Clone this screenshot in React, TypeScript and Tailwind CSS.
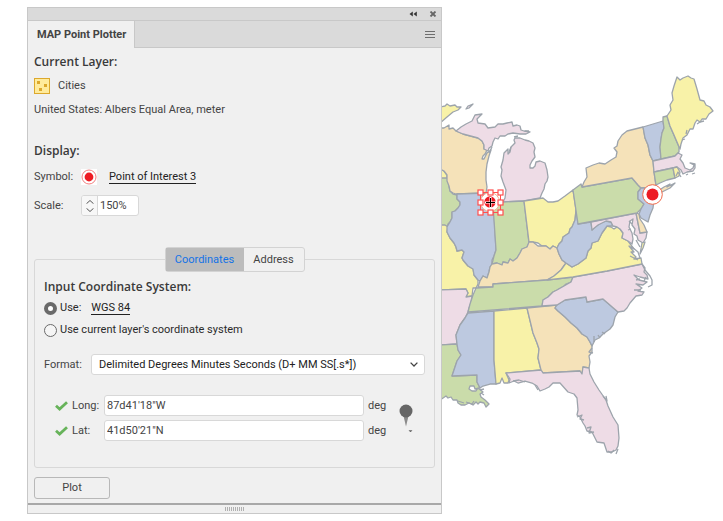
import { useState } from 'react';
import type { ReactNode } from 'react';

interface Region {
  name: string;
  fill: string;
  d: string;
}

const YELLOW = '#f8f2a8';
const PINK = '#eedce6';
const GREEN = '#cadcaa';
const BLUE = '#bdc9e0';
const ORANGE = '#f5e2b9';

const regions: Region[] = [
  { name: 'Minnesota arrowhead', fill: YELLOW, d: 'M440 107 445 106 447 104 450 106 455 105 457 107 461 107 458 110 453 112 447 117 440 123Z' },
  { name: 'Minnesota', fill: YELLOW, d: 'M440 169 444 171 447 175 447 179 440 179Z' },
  { name: 'Iowa', fill: GREEN, d: 'M440 178 447 178 448 180 449 186 450 191 453 194 457 195 457 199 460 202 460 205 458 208 455 211 452 212 452 218 450 222 448 224 447 227 440 225Z' },
  { name: 'Missouri', fill: YELLOW, d: 'M440 225 445 225 448 227 447 232 450 238 454 243 456 247 457 251 462 250 464 252 462 258 463 260 468 266 473 269 474 275 478 280 478 284 476 288 473 288 472 296 466 297 468 293 466 289 440 290Z' },
  { name: 'Arkansas', fill: PINK, d: 'M440 290 466 289 468 293 466 297 472 296 471 303 469 308 468 312 465 318 460 325 458 330 456 335 457 344 440 345Z' },
  { name: 'Louisiana', fill: GREEN, d: 'M440 345 457 344 458 350 461 355 457 361 455 367 452 376 477 375 477 382 480 388 475 389 474 386 470 386 469 389 472 391 476 391 478 388 483 392 480 394 481 397 485 400 489 404 486 407 484 403 480 402 478 404 476 402 473 405 469 403 465 405 461 405 458 403 457 400 453 400 451 397 448 398 446 396 440 400Z' },
  { name: 'Wisconsin', fill: ORANGE, d: 'M440 128 444 128 449 125 449 129 453 128 456 131 463 134 478 138 482 141 484 145 484 149 487 150 485 154 483 156 482 159 484 159 487 153 491 150 489 156 487 164 486 172 486 180 487 187 486 193 456 194 453 193 450 191 449 186 447 181 447 175 444 171 440 169Z' },
  { name: 'Upper Michigan', fill: PINK, d: 'M456 131 461 127 466 124 472 121 475 115 482 114 477 119 478 123 485 124 488 128 495 127 498 124 503 124 507 123 512 122 513 126 517 125 520 126 521 130 524 131 530 132 526 134 520 134 513 133 508 134 505 136 500 136 498 139 495 138 493 142 492 146 489 148 488 151 484 149 484 145 482 141 478 138 463 134Z' },
  { name: 'Isle Royale', fill: PINK, d: 'M466 109 468 106 473 104 469 108Z' },
  { name: 'Michigan', fill: PINK, d: 'M515 138 520 138 525 140 529 141 533 143 535 148 534 152 535 157 532 161 530 165 530 168 533 168 535 166 536 162 540 161 545 163 547 170 548 177 547 181 545 184 544 189 542 193 540 198 524 201 503 202 505 198 506 190 503 182 501 176 502 170 501 167 503 160 504 153 508 149 508 154 510 152 511 147 515 143 514 140Z' },
  { name: 'Illinois', fill: BLUE, d: 'M457 194 486 193 488 200 493 205 494 213 496 250 494 256 492 260 492 264 490 267 489 272 487 278 483 276 480 281 478 280 474 275 473 269 468 266 463 260 462 258 464 252 462 250 457 251 456 247 454 243 450 238 447 232 447 227 450 222 452 218 452 212 455 211 458 208 460 205 460 202 457 199Z' },
  { name: 'Indiana', fill: GREEN, d: 'M493 205 497 204 503 202 524 201 529 243 527 247 522 249 520 253 517 258 513 261 510 259 508 263 503 262 502 265 497 263 492 264 494 256 496 250Z' },
  { name: 'Ohio', fill: YELLOW, d: 'M524 201 543 198 548 202 553 202 558 201 565 196 573 190 576 210 575 220 572 227 570 229 569 233 563 237 562 241 559 244 557 248 553 246 550 249 546 246 542 246 538 243 533 242 529 242Z' },
  { name: 'Kentucky', fill: ORANGE, d: 'M478 287 480 281 483 276 487 278 489 272 490 267 492 264 497 263 502 265 503 262 508 263 510 259 513 261 517 258 520 253 522 249 527 247 529 242 533 242 538 246 542 246 546 246 550 249 553 246 557 248 559 254 562 260 566 263 561 270 554 276 547 280 493 284 493 287Z' },
  { name: 'Tennessee', fill: GREEN, d: 'M476 288 493 287 493 284 547 280 573 277 571 282 566 284 564 286 557 290 553 292 548 297 543 300 542 306 468 312 470 304 473 295Z' },
  { name: 'Mississippi', fill: BLUE, d: 'M468 313 494 311 494 360 496 384 490 384 483 386 480 388 477 382 477 375 452 376 455 367 457 361 461 355 458 350 457 344 456 335 458 330 460 325 465 318Z' },
  { name: 'Alabama', fill: YELLOW, d: 'M494 311 527 308 533 333 537 343 539 349 538 358 541 370 506 373 509 380 508 383 504 383 502 378 500 383 496 384 494 360Z' },
  { name: 'Georgia', fill: ORANGE, d: 'M527 308 557 305 555 308 558 311 565 317 571 323 577 328 582 334 587 337 590 342 592 346 592 352 589 356 590 362 589 368 583 367 582 374 580 371 543 373 541 370 538 358 539 349 537 343 533 333Z' },
  { name: 'Florida', fill: PINK, d: 'M506 373 541 370 543 373 580 371 582 374 583 367 589 368 590 374 594 382 599 390 606 400 608 406 613 417 618 425 619 438 618 446 616 450 612 452 607 452 604 443 597 442 595 438 592 432 587 431 585 426 583 423 580 417 577 415 578 410 577 398 574 394 568 392 560 383 553 383 549 387 545 389 540 391 537 386 532 383 525 381 518 383 514 381 509 383 510 379Z' },
  { name: 'South Carolina', fill: BLUE, d: 'M557 305 565 300 586 297 587 302 603 299 618 312 615 317 613 325 610 329 603 334 599 338 595 340 592 346 590 342 587 337 582 334 577 328 571 323 565 317 558 311 555 308Z' },
  { name: 'North Carolina', fill: PINK, d: 'M573 277 607 271 642 264 645 268 644 272 647 275 648 279 640 277 634 275 639 280 647 282 643 285 636 284 642 288 638 291 644 292 642 295 636 296 630 303 627 308 624 311 618 312 603 299 587 302 586 297 565 300 557 305 542 306 543 300 548 297 553 292 557 290 564 286 571 282Z' },
  { name: 'Virginia', fill: YELLOW, d: 'M547 280 554 276 561 270 566 263 572 267 578 264 586 258 588 251 591 248 592 243 598 241 602 233 607 226 611 227 614 229 617 227 620 229 623 233 622 238 628 241 631 245 634 249 629 246 634 252 631 252 636 257 634 259 641 258 642 264 607 271 573 277Z' },
  { name: 'West Virginia', fill: BLUE, d: 'M576 210 578 224 591 222 592 230 595 227 598 225 602 222 606 221 611 222 613 226 607 226 602 233 598 241 592 243 591 248 588 251 586 258 578 264 572 267 566 263 562 260 559 254 557 248 559 244 562 241 563 237 569 233 570 229 572 227 575 220Z' },
  { name: 'Maryland', fill: PINK, d: 'M591 222 636 213 640 233 647 232 646 238 643 243 638 240 637 236 634 234 635 229 632 225 633 219 630 221 629 227 632 233 633 239 632 244 628 241 622 238 623 233 620 229 617 227 613 226 611 222 606 221 598 225 592 230Z' },
  { name: 'Delmarva tip', fill: YELLOW, d: 'M642 243 645 242 643 248 640 254Z' },
  { name: 'Delaware', fill: ORANGE, d: 'M636 213 639 214 640 219 644 225 647 232 640 233Z' },
  { name: 'Pennsylvania', fill: GREEN, d: 'M573 190 581 184 582 187 632 178 638 185 641 188 638 192 638 199 644 204 641 209 637 213 578 224Z' },
  { name: 'New York', fill: ORANGE, d: 'M582 187 584 182 587 177 586 168 593 165 599 163 605 164 611 160 616 157 617 152 614 148 617 146 618 141 622 135 627 131 643 127 645 138 648 145 650 155 653 161 654 172 656 186 653 192 647 188 641 188 638 185 632 178Z' },
  { name: 'New Jersey', fill: BLUE, d: 'M641 188 647 188 652 191 651 196 654 200 653 208 650 215 648 222 641 218 639 214 641 209 644 204 638 199 638 192Z' },
  { name: 'Long Island', fill: ORANGE, d: 'M658 191 664 187 670 184 667 187 675 183 670 188 662 192Z' },
  { name: 'Vermont', fill: BLUE, d: 'M643 127 663 121 664 128 662 133 661 139 660 147 661 159 653 161 650 155 648 145 645 138Z' },
  { name: 'New Hampshire', fill: GREEN, d: 'M663 121 663 117 667 116 670 126 679 147 679 152 675 156 661 159 660 147 661 139 662 133 664 128Z' },
  { name: 'Maine', fill: YELLOW, d: 'M667 116 671 110 670 105 673 100 672 93 674 86 677 77 680 80 683 78 688 76 691 78 694 79 697 89 700 100 704 101 706 105 710 107 713 111 709 114 706 119 702 119 700 122 697 120 695 123 693 129 690 129 687 135 683 138 681 144 680 149 674 135 670 126Z' },
  { name: 'Massachusetts', fill: PINK, d: 'M653 161 675 156 678 153 682 155 680 159 683 163 685 168 690 170 693 168 694 165 690 163 695 164 695 168 693 171 687 172 683 174 681 170 677 167 654 172Z' },
  { name: 'Connecticut', fill: GREEN, d: 'M654 172 673 168 675 178 667 180 660 183 656 185Z' },
  { name: 'Rhode Island', fill: YELLOW, d: 'M673 168 677 167 680 172 679 176 675 178Z' },
];

// barrier islands, bays and other shoreline scribbles
const shoreline = [
  'M642 264 645 270 650 276 652 280 652 285 648 287',
  'M630 256 638 260M632 247 638 252 640 258M636 240 640 247',
  'M686 134 687 130M697 124 700 122 704 121M682 140 685 139',
  'M686 175 688 174M692 174 695 173M676 176 678 172 681 177',
  'M603 396 607 401 606 396M577 417 582 415 580 419 584 420M587 428 591 427 589 433 594 432',
  'M513 381 519 380 525 382M535 385 538 390M608 451 611 453 614 450M616 454 618 449',
  'M594 336 594 342M592 348 589 352 593 353M598 335 600 338M602 332 605 334',
  'M458 401 464 403M466 402 472 404 474 401M481 393 484 395M480 390 484 389',
  'M640 279 636 280M646 277 644 281M641 290 634 290M629 221 632 224M628 230 631 229',
  'M511 147 509 152M514 137 518 136M525 131 529 131M492 147 489 153',
];

const handles = [
  [480, 192], [490, 192], [500, 192],
  [480, 202], [500, 202],
  [480, 212], [490, 212], [500, 212],
];

const StateMap = () => (
  <svg viewBox="442 0 281 521" className="block h-auto w-full" role="img" aria-label="Eastern United States">
    <g stroke="#9da4ac" strokeWidth="1.3" strokeLinejoin="round">
      {regions.map(r => (
        <path key={r.name} fill={r.fill} d={r.d} />
      ))}
      {shoreline.map(d => (
        <path key={d} fill="none" d={d} />
      ))}
    </g>
    <circle cx="652.5" cy="194.5" r="9.8" fill="#fff" stroke="#f0694a" strokeWidth="1" />
    <circle cx="652.5" cy="194.5" r="6" fill="#ed1c24" />
    <circle cx="490" cy="202" r="9.5" fill="#fff" stroke="#f5b08a" strokeWidth="1" />
    <circle cx="490" cy="202" r="5.7" fill="#ed1c24" />
    <path d="M490.5 197v11M485 202.5h11" stroke="#fff" strokeWidth="2" />
    <path d="M490.5 198v9M486 202.5h9" stroke="#000" strokeWidth="1" />
    <rect x="480.5" y="192.5" width="20" height="20" fill="none" stroke="#ff4f4f" />
    {handles.map(([x, y]) => (
      <rect key={`${x}-${y}`} x={x - 2} y={y - 2} width="5" height="5" fill="#fff" stroke="#ff4f4f" strokeWidth="1.2" />
    ))}
  </svg>
);

const CheckMark = () => (
  <svg viewBox="0 0 13 10" className="h-[10px] w-[13px] shrink-0" aria-hidden="true">
    <path d="M1 4.800 4.600 8 12 1.200" fill="none" stroke="#67b35a" strokeWidth="2.800" />
  </svg>
);

interface CoordRowProps {
  id: string;
  label: string;
  value: string;
  onChange: (v: string) => void;
}

const CoordRow = ({ id, label, value, onChange }: CoordRowProps) => (
  <div className="flex items-center">
    <CheckMark />
    <label htmlFor={id} className="ml-1 w-8 shrink-0">
      {label}
    </label>
    <input
      id={id}
      value={value}
      onChange={e => onChange(e.target.value)}
      className="h-[21px] min-w-0 flex-1 rounded-[3px] border border-[#d8d8d8] bg-white px-[2px] outline-none"
    />
    <span className="ml-1 w-[19px] shrink-0">deg</span>
  </div>
);

interface RadioRowProps {
  id: string;
  checked: boolean;
  onSelect: () => void;
  children: ReactNode;
}

const RadioRow = ({ id, checked, onSelect, children }: RadioRowProps) => (
  <div className="flex h-[22px] items-center text-[#2b2b2b]">
    <input
      id={id}
      type="radio"
      name="crs"
      checked={checked}
      onChange={onSelect}
      className="mr-[3px] size-[13px] shrink-0 appearance-none rounded-full border border-[#6a6a6a] bg-[#f5f5f5] checked:border-4 checked:bg-white"
    />
    {children}
  </div>
);

const Heading = ({ children }: { children: ReactNode }) => (
  <h2 className="font-['Open_Sans',sans-serif] text-[12px] font-semibold text-[#3a3a3a]">{children}</h2>
);

const App = () => {
  const [crs, setCrs] = useState('named');
  const [scale, setScale] = useState('150%');
  const [long, setLong] = useState('87d41\'18"W');
  const [lat, setLat] = useState('41d50\'21"N');

  return (
    <main className="grid grid-cols-[415fr_281fr] items-start bg-white pl-[27px] font-[Roboto,sans-serif] text-[11px] leading-4 text-[#444]">
      <section className="mt-[7px] border border-[#c8c8c8] bg-[#f0f0f0]">
        <div className="flex h-[13px] items-center justify-end gap-3 border-b border-[#c8c8c8] bg-[#dadada] pr-1">
          <button aria-label="Collapse">
            <svg viewBox="0 0 8 6" className="block h-[6px] w-2">
              <path d="M3.800 .5 .500 3l3.300 2.500zM7.800 .5 4.500 3l3.300 2.500z" fill="#333" />
            </svg>
          </button>
          <button aria-label="Close">
            <svg viewBox="0 0 8 6" className="block h-[6px] w-2">
              <path d="M1.500 .5 6.500 5.500M6.500 .5 1.500 5.500" stroke="#666" strokeWidth="1.800" />
            </svg>
          </button>
        </div>
        <div className="flex h-[27px] bg-[#dadada]">
          <h1 className="flex items-center border-r border-[#c8c8c8] bg-[#f0f0f0] pr-2 pl-[9px] font-bold">
            MAP Point Plotter
          </h1>
          <div className="flex flex-1 items-center justify-end border-b border-[#c8c8c8] pr-[6px]">
            <button aria-label="Panel menu">
              <svg viewBox="0 0 10 7" className="block h-[7px] w-[10px]">
                <path d="M0 .5h10M0 3.500h10M0 6.500h10" stroke="#6e6e6e" />
              </svg>
            </button>
          </div>
        </div>

        <div className="px-[6px] pt-[6px] pb-1">
          <Heading>Current Layer:</Heading>
          <div className="mt-2 flex items-center gap-2">
            <svg viewBox="0 0 16 16" className="size-4" aria-hidden="true">
              <rect x=".5" y=".5" width="15" height="15" fill="#ffeb9c" stroke="#dca82c" />
              <path d="M3 3h3v3H3zM10 6h3v3h-3zM5 10h3v3H5z" fill="#dca82c" />
            </svg>
            <span>Cities</span>
          </div>
          <p className="mt-2 mb-[25px]">United States: Albers Equal Area, meter</p>

          <Heading>Display:</Heading>
          <div className="mt-[10px] flex items-center">
            <span className="w-[47px]">Symbol:</span>
            <svg viewBox="0 0 16 16" className="size-4" aria-hidden="true">
              <rect width="16" height="16" fill="#fff" />
              <circle cx="8" cy="8" r="7" fill="#fff" stroke="#f27f7f" />
              <circle cx="8" cy="8" r="4.400" fill="#ed1c24" />
            </svg>
            <a href="#symbol" className="ml-3 border-b border-[#222] leading-[13px] text-[#222]">
              Point of Interest 3
            </a>
          </div>
          <div className="mt-[10px] flex items-center">
            <label htmlFor="scale" className="w-[47px]">
              Scale:
            </label>
            <div className="flex h-[21px] w-[58px] overflow-hidden rounded-[3px] border border-[#d8d8d8] bg-white">
              <div className="flex w-4 shrink-0 flex-col items-center justify-center gap-1 border-r border-[#d8d8d8] bg-[#f7f7f7]">
                <button aria-label="Increase scale" className="h-1">
                  <svg viewBox="0 0 8 4" className="block h-1 w-2">
                    <path d="M.5 3.700 4 .5 7.500 3.700" fill="none" stroke="#555" />
                  </svg>
                </button>
                <button aria-label="Decrease scale" className="h-1">
                  <svg viewBox="0 0 8 4" className="block h-1 w-2">
                    <path d="M.5 .3 4 3.500 7.500 .3" fill="none" stroke="#555" />
                  </svg>
                </button>
              </div>
              <input
                id="scale"
                value={scale}
                onChange={e => setScale(e.target.value)}
                className="min-w-0 flex-1 px-[2px] outline-none"
              />
            </div>
          </div>

          <div className="mt-[43px] rounded-[3px] border border-[#d8d8d8] px-[9px] pb-[26px]">
            <div role="tablist" className="mx-auto -mt-[13px] mb-[7px] flex h-[25px] w-[140px] rounded-[3px] border border-[#d3d3d3] bg-[#f0f0f0]">
              <button role="tab" aria-selected="true" className="flex-[78] bg-[#bcbcbc] text-[#1473e6]">
                Coordinates
              </button>
              <button role="tab" aria-selected="false" className="flex-[60]">
                Address
              </button>
            </div>

            <Heading>Input Coordinate System:</Heading>
            <div className="mt-[2px]">
              <RadioRow id="crs-named" checked={crs === 'named'} onSelect={() => setCrs('named')}>
                <label htmlFor="crs-named">Use:</label>
                <a href="#crs" className="ml-[10px] border-b border-[#222] leading-[13px] text-[#222]">
                  WGS 84
                </a>
              </RadioRow>
              <RadioRow id="crs-layer" checked={crs === 'layer'} onSelect={() => setCrs('layer')}>
                <label htmlFor="crs-layer">Use current layer's coordinate system</label>
              </RadioRow>
            </div>

            <div className="mt-[13px] flex items-center">
              <label htmlFor="format" className="w-[47px] shrink-0">
                Format:
              </label>
              <div className="relative flex-1">
                <select
                  id="format"
                  className="block h-[21px] w-full appearance-none rounded-[3px] border border-[#d8d8d8] bg-white pl-[7px] text-[#222] outline-none"
                >
                  <option>Delimited Degrees Minutes Seconds (D+ MM SS[.s*])</option>
                </select>
                <svg viewBox="0 0 8 5" className="pointer-events-none absolute top-2 right-[7px] h-[5px] w-2" aria-hidden="true">
                  <path d="M.6 .6 4 4 7.400 .6" fill="none" stroke="#444" strokeWidth="1.300" />
                </svg>
              </div>
            </div>

            <div className="mt-5 flex items-center pl-[11px]">
              <div className="flex flex-1 flex-col gap-1">
                <CoordRow id="long" label="Long:" value={long} onChange={setLong} />
                <CoordRow id="lat" label="Lat:" value={lat} onChange={setLat} />
              </div>
              <button aria-label="Pick location" className="mr-3 ml-3">
                <svg viewBox="0 0 14 28" className="block h-7 w-[14px]">
                  <path d="M4.500 12h5L7 22.500z" fill="#8a8a8a" />
                  <circle cx="7" cy="7" r="6.500" fill="#666" />
                  <path d="M10 26.500h3l-1.500 1.500z" fill="#555" stroke="#555" strokeWidth=".4" />
                </svg>
              </button>
            </div>
          </div>

          <button className="mt-[9px] block h-[22px] w-[76px] rounded-[3px] border border-[#b8b8b8]">Plot</button>
        </div>

        <div className="flex h-[10px] items-center justify-center border-t-2 border-[#a8a8a8] bg-[#f0f0f0]">
          <svg viewBox="0 0 19 4" className="h-1 w-[19px]" aria-hidden="true">
            <path d="M.5 0v4M2.500 0v4M4.500 0v4M6.500 0v4M8.500 0v4M10.500 0v4M12.500 0v4M14.500 0v4M16.500 0v4M18.500 0v4" stroke="#b0b0b0" />
          </svg>
        </div>
      </section>
      <StateMap />
    </main>
  );
};

export default App;
